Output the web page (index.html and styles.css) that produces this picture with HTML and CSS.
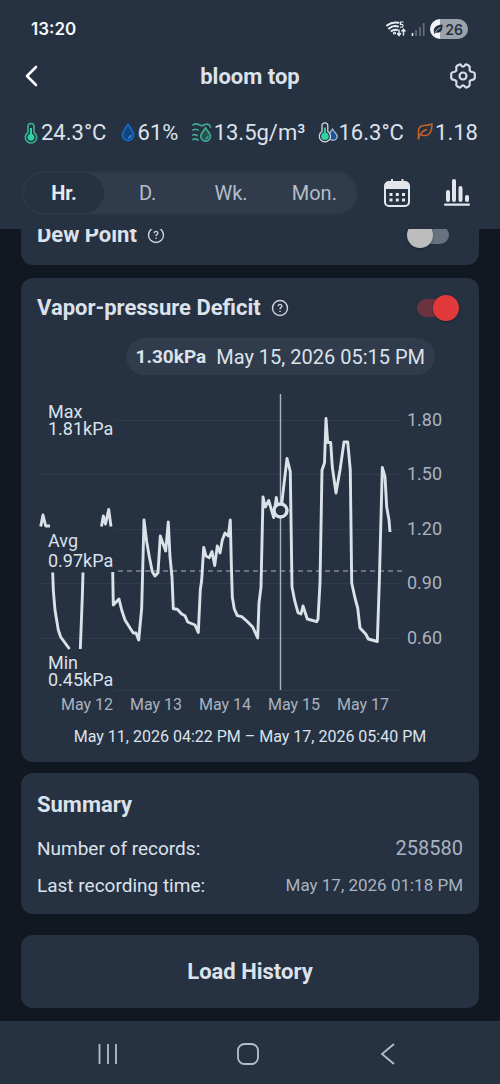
FILE: index.html
```
<!DOCTYPE html>
<html lang="en">
<head>
<meta charset="utf-8">
<meta name="viewport" content="width=device-width, initial-scale=1">
<title>bloom top</title>
<link rel="stylesheet" href="styles.css">
</head>
<body>
<header class="header">
  <div class="status">
    <span class="clock">13:20</span>
    <div class="status-icons">
      <svg class="wifi" width="20" height="16" viewBox="0 0 20 16" fill="none" stroke="#e8edf3" stroke-width="2" stroke-linecap="round">
        <path d="M1 4.500Q6 .5 12.500 1.800M3 7.500Q7 4 12 5.500M5.500 10Q8 8 11 9"/>
        <circle cx="8.500" cy="12" r=".6"/>
        <path d="M17 1H14.500V3.500Q17 3 17 4.800Q17 6.500 14.500 6.200" stroke-width="1.200"/>
        <path d="M13 9v5M11.500 12.500L13 14.500L14.500 12.500M17.500 14V8.500M16 10L17.500 8.300L19 10" stroke-width="1.400"/>
      </svg>
      <svg width="14" height="14" viewBox="0 0 14 14" fill="none" stroke-width="1.600">
        <path d="M1.500 14v-3" stroke="#f2f5f8"/>
        <path d="M5 14V8M9 14V5M12.700 14V1" stroke="#667180"/>
      </svg>
      <span class="battery">
        <svg width="10" height="12" viewBox="0 0 10 12"><path d="M1 9.500C0 5 3 2 9.500 1.500C10 8 7 10.500 3 9.500L1 11Z" fill="#222d3b"/><path d="M2 9.500Q4 6 7.500 4.500" stroke="#d7dbe0" stroke-width=".8" fill="none"/></svg>
        <span>26</span>
      </span>
    </div>
  </div>
  <div class="titlebar">
    <button class="icon-btn back" aria-label="Back">
      <svg width="22" height="22" viewBox="0 0 22 22" fill="none" stroke="#fff" stroke-width="2.600" stroke-linecap="round" stroke-linejoin="round"><path d="M13 2L4 11L13 20"/></svg>
    </button>
    <h1 class="title">bloom top</h1>
    <button class="icon-btn" aria-label="Settings">
      <svg width="28" height="28" viewBox="0 0 28 28" fill="none" stroke="#d5dce6" stroke-width="2.200" stroke-linejoin="round">
        <path d="M9.800 2.800Q11.300 2 12 3.300Q14 5.800 16 3.300Q16.700 2 18.200 2.800L20.200 4Q21.200 4.800 20.700 6.200Q19.900 9.600 23.300 10Q25.500 10.200 25.800 11.500V16Q25.500 17.600 23.300 17.800Q19.900 18.200 20.700 21.600Q21.200 23.200 20.200 24L18.200 25.200Q16.700 26 16 24.700Q14 22.200 12 24.700Q11.300 26 9.800 25.200L7.800 24Q6.800 23.200 7.300 21.600Q8.100 18.200 4.700 17.800Q2.500 17.600 2.200 16V11.500Q2.500 10.200 4.700 10Q8.100 9.600 7.300 6.200Q6.800 4.800 7.800 4Z"/>
        <circle cx="14" cy="14" r="3.500"/>
      </svg>
    </button>
  </div>
  <div class="metrics">
    <span class="metric">
      <svg width="16" height="22" viewBox="0 0 16 22"><path d="M5 10.500V4.500a3 3 0 0 1 6 0v6a5.700 5.700 0 1 1-6 0Z" fill="none" stroke="#38b494" stroke-width="1.600"/><path d="M8 6v8" stroke="#2fd0a4" stroke-width="2"/><circle cx="8" cy="15.300" r="3.400" fill="#2fd0a4"/></svg>
      <span>24.3°C</span>
    </span>
    <span class="metric">
      <svg width="16" height="22" viewBox="0 0 16 22"><path d="M8 2.500C5 7 2.500 9.500 2.500 13a5.500 5.500 0 0 0 11 0C13.500 9.500 11 7 8 2.500Z" fill="#14447f" stroke="#1268bd" stroke-width="2"/><path d="M10.800 13a3 3 0 0 1-2.600 2.800" fill="none" stroke="#4a9be8" stroke-width="1.200"/></svg>
      <span>61%</span>
    </span>
    <span class="metric">
      <svg width="20" height="22" viewBox="0 0 20 22" fill="none" stroke="#3fa892" stroke-width="1.700" stroke-linecap="round"><path d="M1 3Q4 1 7 2.800T13 2.500Q17 1 18.500 5M1 8Q3.500 6.500 6 8M1 13Q3 12 5 13.500M1 17.500Q3 16 6 18"/><path d="M13.500 6C11 9.500 8.700 11.500 8.700 14.200a4.900 4.900 0 0 0 9.800 0C18.500 11.500 16 9.500 13.500 6Z" fill="#24564f"/><path d="M16 14a2.500 2.500 0 0 1-2.200 2.500" stroke-width="1.200"/></svg>
      <span>13.5g/m³</span>
    </span>
    <span class="metric metric-tight">
      <svg width="20" height="22" viewBox="0 0 20 22"><path d="M14.500 7C12 11 10.500 12 10.500 14.500a4.400 4.400 0 0 0 8.700 0C19.200 12 17 11 14.500 7Z" fill="#1d5299" stroke="#aebdcb" stroke-width="1.300"/><path d="M4 9.500V3.700a2.900 2.900 0 0 1 5.800 0V9.500a5.600 5.600 0 1 1-5.800 0Z" fill="#263141" stroke="#cdd9df" stroke-width="1.300"/><path d="M6.900 5.500v8" stroke="#2fd0a4" stroke-width="2"/><circle cx="6.900" cy="14.300" r="3.800" fill="#2fd0a4"/></svg>
      <span>16.3°C</span>
    </span>
    <span class="metric">
      <svg width="16" height="22" viewBox="0 0 16 22" fill="none" stroke="#c4632a" stroke-width="1.600" stroke-linecap="round" stroke-linejoin="round"><path d="M1.500 17V9Q1.500 4 7 3.500Q11 3.500 15 2Q15 7 13.500 10Q11.500 14 7 13.500Q5 13.500 4 12.500"/><path d="M1.500 16.500Q3 10 9.500 7.500"/></svg>
      <span>1.18</span>
    </span>
  </div>
  <div class="range">
    <nav class="tabs" aria-label="Time range">
      <button class="tab tab-active" aria-pressed="true">Hr.</button>
      <button class="tab">D.</button>
      <button class="tab">Wk.</button>
      <button class="tab">Mon.</button>
    </nav>
    <button class="icon-btn" aria-label="Calendar">
      <svg width="26" height="30" viewBox="0 0 26 30"><rect x="1" y="4" width="24" height="24" rx="4" fill="none" stroke="#e3e6eb" stroke-width="2"/><path d="M1 11V7Q1 3.500 5 3.500H21Q25 3.500 25 7V11ZM7 1h2v4H7ZM17.500 1h2v4h-2Z" fill="#e3e6eb"/><path d="M5.500 15h3v3h-3zM11.800 15h3v3h-3zM18 15h3v3h-3zM5.500 20.500h3v3h-3zM11.800 20.500h3v3h-3zM18 20.500h3v3h-3z" fill="#e3e6eb"/></svg>
    </button>
    <button class="icon-btn" aria-label="Statistics">
      <svg width="26" height="30" viewBox="0 0 26 30" fill="#e3e6eb"><rect x="2" y="12" width="4" height="12" rx="2"/><rect x="8" y="1" width="4" height="23" rx="2"/><rect x="14.500" y="8" width="4" height="16" rx="2"/><rect x="21" y="17" width="4" height="7" rx="2"/><rect x="0" y="25.500" width="26" height="2.200" rx="1"/></svg>
    </button>
  </div>
</header>

<main class="content">
  <section class="card scrolled">
    <div class="card-head">
      <label class="card-title" for="dew">Dew Point</label>
      <svg class="help" width="18" height="18" viewBox="0 0 18 18" fill="none" stroke="#cdd4dd" stroke-width="1.400"><circle cx="9" cy="9" r="7.500"/><path d="M7.200 7.200Q7.200 5.400 9 5.400T10.800 7.200Q10.800 8 9.800 8.600Q9 9.200 9 10.200M9 11.800V13"/></svg>
      <input class="switch" type="checkbox" id="dew">
    </div>
  </section>

  <section class="card">
    <div class="card-head">
      <label class="card-title" for="vpd">Vapor-pressure Deficit</label>
      <svg class="help" width="18" height="18" viewBox="0 0 18 18" fill="none" stroke="#cdd4dd" stroke-width="1.400"><circle cx="9" cy="9" r="7.500"/><path d="M7.200 7.200Q7.200 5.400 9 5.400T10.800 7.200Q10.800 8 9.800 8.600Q9 9.200 9 10.200M9 11.800V13"/></svg>
      <input class="switch" type="checkbox" id="vpd" checked>
    </div>
    <p class="readout"><strong>1.30kPa</strong><span class="readout-date">May 15, 2026 05:15 PM</span></p>
    <svg class="chart" viewBox="37 390 426 328" role="img" aria-label="Vapor-pressure deficit chart">
      <path class="grid" d="M114 420.500H400M40 474.500H400M114 529.500H400M40 583.500H400M40 638.500H400M114 690.500H400"/>
      <path class="average" d="M118 571H402"/>
      <path class="cursor" d="M280.500 394V690"/>
      <path class="series" d="M40.700 526.500L43 515L45.700 526L50 526M101.500 526.500L103.300 516L105.500 524L108.700 509.500L111 526.500M52.700 572.500L53.300 590L55 610L58.300 630L60.700 637L69.500 649M83 572.500L82.300 597L80.300 649M112.700 572L113.300 605L119 599L121.700 610L125 620L130 628L133.300 633L136 633L138.700 640L141.700 608L144 520L146.700 541.700L149.300 556.700L152.300 571.700L155 576L158 572.700L160.300 536L165.700 551L168.300 522L170 556.700L172 577L173.300 608.700L177.300 609.300L181.700 614L185 615.700L187.700 622L195 625L198.300 632.500L200.300 590L201.700 580L203.700 547.500L206 556L209.300 557.700L212 551.500L214.700 565.500L217.300 546L220 553L222.300 540L225 533L228.300 536L230.300 520L231.300 563L232.300 597L234.300 609L237.300 615.700L241.700 616.700L246.700 621L252.700 627L257.700 638L259 603L261 587L263 497L265.300 507L268.700 500.500L273.700 517.500L276.300 497.500L278 510L281 510.700L283.300 490L287 458.500L290.300 471.700L292 586.700L294.700 600.700L298 612.700L301 614L303 606L307.300 619L316.700 621.700L318 619L320 583L322 470L324.500 463L326 418.500L327.700 442.500L330.700 442.500L332.300 467L336 493L340 470L344 442L347.700 442L350.300 470L351.700 583L355 598L357.700 608L360 628L365.700 634L368.300 639L377.300 641.500L379.300 583L382.300 467.500L385 476.700L386.700 507L389 520L390 532"/>
      <circle class="marker" cx="280.500" cy="510.500" r="6.500"/>
      <g class="extremes">
        <text x="48" y="418">Max</text><text x="48" y="435">1.81kPa</text>
        <text x="48" y="547">Avg</text><text x="48" y="567">0.97kPa</text>
        <text x="48" y="669">Min</text><text x="48" y="686">0.45kPa</text>
      </g>
      <g class="scale">
        <text x="407" y="426">1.80</text><text x="407" y="480">1.50</text><text x="407" y="535">1.20</text><text x="407" y="589">0.90</text><text x="407" y="644">0.60</text>
      </g>
      <g class="dates">
        <text x="87" y="710">May 12</text><text x="156" y="710">May 13</text><text x="225" y="710">May 14</text><text x="294" y="710">May 15</text><text x="363" y="710">May 17</text>
      </g>
    </svg>
    <p class="period">May 11, 2026 04:22 PM – May 17, 2026 05:40 PM</p>
  </section>

  <section class="card summary">
    <h2 class="card-title">Summary</h2>
    <dl class="facts">
      <div class="fact"><dt>Number of records:</dt><dd>258580</dd></div>
      <div class="fact"><dt>Last recording time:</dt><dd class="fact-date">May 17, 2026 01:18 PM</dd></div>
    </dl>
  </section>

  <button class="load">Load History</button>
</main>

<nav class="navbar" aria-label="System">
  <button class="icon-btn" aria-label="Recent apps"><svg width="24" height="24" viewBox="0 0 24 24" fill="none" stroke="#b3bfcd" stroke-width="1.800"><path d="M3.500 2V22M12 2V22M20 2V22"/></svg></button>
  <button class="icon-btn" aria-label="Home"><svg width="24" height="24" viewBox="0 0 24 24" fill="none" stroke="#b3bfcd" stroke-width="1.800"><rect x="2" y="2" width="20" height="20" rx="6.500"/></svg></button>
  <button class="icon-btn" aria-label="Go back"><svg width="24" height="24" viewBox="0 0 24 24" fill="none" stroke="#b3bfcd" stroke-width="1.800"><path d="M18 2L6 12L18 22"/></svg></button>
</nav>
</body>
</html>
```
FILE: styles.css
```
* {
  box-sizing: border-box;
}

body {
  margin: 0;
  min-height: 100vh;
  display: flex;
  flex-direction: column;
  background: #111822;
  color: #dbe2ec;
  font-family: Roboto, "Liberation Sans", sans-serif;
}

h1, h2, p, dl, dd {
  margin: 0;
}

button {
  border: 0;
  padding: 0;
  background: none;
  color: inherit;
  font-family: inherit;
}

svg {
  display: block;
}

.header {
  background: #263141;
  padding-bottom: 14px;
}

.status {
  display: flex;
  justify-content: space-between;
  align-items: center;
  height: 58px;
  padding: 0 32px 0 31px;
}

.clock {
  font: 600 17px Inter, sans-serif;
  color: #f4f8fb;
}

.status-icons {
  display: flex;
  align-items: center;
  gap: 5px;
}

.battery {
  display: flex;
  align-items: center;
  gap: 2px;
  height: 20px;
  padding: 0 5px 0 3px;
  border-radius: 10px;
  background: linear-gradient(90deg, #f2f4f6 26%, #9aa2ac 26%);
  color: #263141;
  font: 600 14px Inter, sans-serif;
}

.titlebar {
  display: flex;
  justify-content: space-between;
  align-items: center;
  height: 36px;
  padding: 0 23px;
}

.icon-btn {
  display: flex;
  align-items: center;
  justify-content: center;
}

.back {
  width: 28px;
  justify-content: flex-start;
}

.title {
  font-size: 22px;
  font-weight: 700;
}

.metrics {
  display: flex;
  justify-content: space-between;
  height: 77px;
  padding: 0 22px 0 23px;
  font-size: 22px;
  line-height: 77px;
}

.metric {
  display: flex;
  align-items: center;
  gap: 2px;
}

.metric-tight {
  gap: 0;
}

.range {
  display: flex;
  align-items: center;
  gap: 34px;
  padding: 0 30px 0 22px;
}

.tabs {
  flex: 1;
  display: flex;
  height: 44px;
  margin-right: -8px;
  border: 2px solid #2d3847;
  border-radius: 22px;
  background: #303b4b;
}

.tab {
  flex: 1;
  border-radius: 20px;
  color: #b3bdc9;
  font-size: 20px;
}

.tab-active {
  flex: 0 0 80px;
  margin-right: 2px;
  background: #263141;
  color: #e4e9f0;
  font-weight: 700;
}

.content {
  flex: 1;
  display: flex;
  flex-direction: column;
  overflow: hidden;
  padding: 0 21px 13px;
}

.card {
  padding: 0 16px;
  margin-bottom: 11px;
  border-radius: 12px;
  background: #263141;
}

/* First card sits partly beneath the header, as after a scroll. */
.scrolled {
  margin-top: -24px;
  margin-bottom: 13px;
}

.card-head {
  display: flex;
  align-items: center;
  height: 60px;
  padding-right: 4px;
}

.card-title {
  font-size: 22px;
  font-weight: 700;
  line-height: 26px;
}

.help {
  margin-left: 10px;
}

.switch {
  appearance: none;
  position: relative;
  width: 52px;
  height: 26px;
  margin: 0 0 0 auto;
}

.switch::before,
.switch::after {
  content: "";
  position: absolute;
}

.switch::before {
  inset: 4px 10px;
  border-radius: 9px;
  background: #67717f;
}

.switch::after {
  left: 0;
  top: 0;
  width: 26px;
  height: 26px;
  border-radius: 50%;
  background: #bdbdbd;
  box-shadow: 0 1px 3px #0004;
}

.switch:checked::before {
  background: #6a333f;
}

.switch:checked::after {
  left: 26px;
  background: #e13939;
}

.readout {
  display: flex;
  align-items: center;
  gap: 10px;
  width: fit-content;
  height: 37px;
  margin: 0 28px 15px auto;
  padding: 0 10px;
  border-radius: 19px;
  background: #303b4b;
  font-size: 19px;
}

.readout-date {
  font-size: 20px;
}

.chart {
  width: 100%;
  height: auto;
}

.chart path {
  fill: none;
}

.grid {
  stroke: #303c4c;
}

.average {
  stroke: #a9b3bf;
  stroke-width: 1.2;
  stroke-dasharray: 5 4;
}

.cursor {
  stroke: #aab3bf;
  stroke-width: 1.4;
}

.series {
  stroke: #dbe1e8;
  stroke-width: 2.9;
  stroke-linejoin: round;
}

.marker {
  fill: #263141;
  stroke: #dbe1e8;
  stroke-width: 3.4;
}

.extremes {
  fill: #dbe2ec;
  font-size: 18px;
}

.scale {
  fill: #a9b3c0;
  font-size: 18px;
}

.dates {
  fill: #a9b3c0;
  font-size: 16px;
  text-anchor: middle;
}

.period {
  padding: 9px 0 15px;
  font-size: 16px;
  line-height: 20px;
  text-align: center;
}

.summary {
  padding-top: 19px;
  padding-bottom: 10px;
  margin-bottom: 21px;
}

.facts {
  padding-top: 12px;
}

.fact {
  display: flex;
  justify-content: space-between;
  font-size: 19px;
  line-height: 37px;
}

.fact dd {
  color: #a9b3c0;
  font-size: 20px;
}

.fact .fact-date {
  font-size: 17px;
}

.load {
  height: 73px;
  border-radius: 12px;
  background: #263141;
  font-size: 22px;
  font-weight: 700;
}

.navbar {
  display: flex;
  justify-content: space-between;
  height: 63px;
  padding: 2px 100px 0 96px;
  background: #263141;
}
```
